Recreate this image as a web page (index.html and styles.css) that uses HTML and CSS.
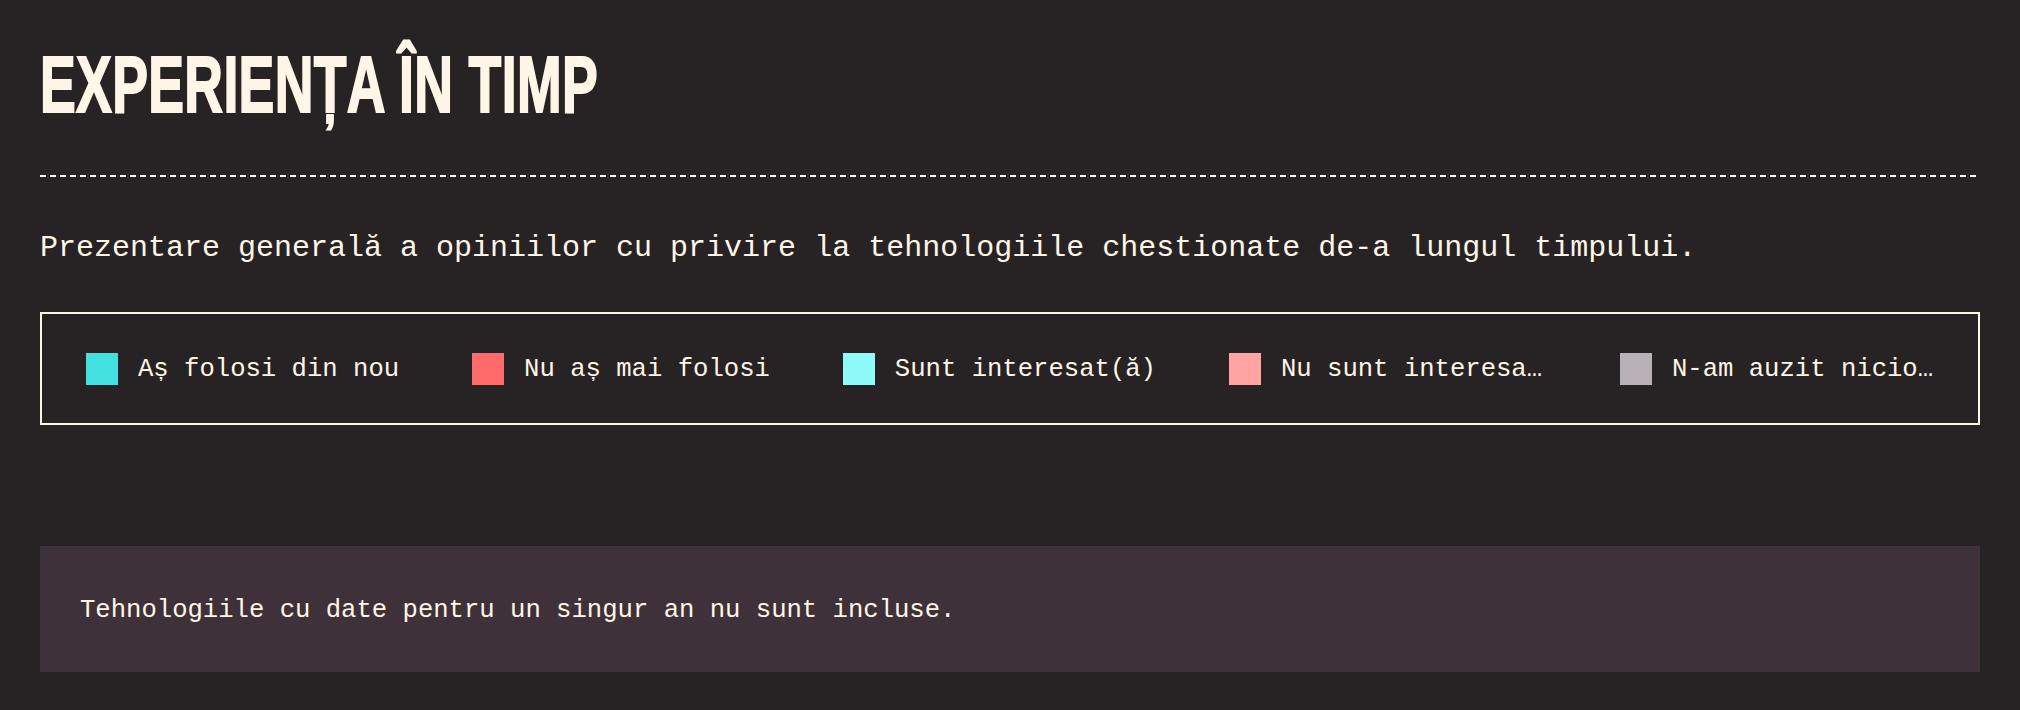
FILE: index.html
```html
<!DOCTYPE html>
<html lang="ro">
<head>
<meta charset="utf-8">
<title>Experiența în timp</title>
<link rel="stylesheet" href="styles.css">
</head>
<body>
<main class="page">
  <header class="block-header">
    <h1 class="block-title"><span class="block-title-text">EXPERIENȚA ÎN TIMP</span></h1>
  </header>
  <div class="rule"></div>
  <p class="block-description">Prezentare generală a opiniilor cu privire la tehnologiile chestionate de-a lungul timpului.</p>
  <div class="legend">
    <div class="legend-item"><span class="swatch swatch-would-use"></span><span class="legend-label">Aș folosi din nou</span></div>
    <div class="legend-item"><span class="swatch swatch-would-not-use"></span><span class="legend-label">Nu aș mai folosi</span></div>
    <div class="legend-item"><span class="swatch swatch-interested"></span><span class="legend-label">Sunt interesat(ă)</span></div>
    <div class="legend-item"><span class="swatch swatch-not-interested"></span><span class="legend-label">Nu sunt interesat(ă)</span></div>
    <div class="legend-item"><span class="swatch swatch-never-heard"></span><span class="legend-label">N-am auzit niciodată</span></div>
  </div>
  <div class="note">Tehnologiile cu date pentru un singur an nu sunt incluse.</div>
</main>
</body>
</html>
```
FILE: styles.css
```css
html, body {
  margin: 0;
  padding: 0;
  background: #272325;
}

body {
  color: #fff6e7;
  font-family: "Liberation Mono", "DejaVu Sans Mono", monospace;
}

.page {
  padding: 44px 40px 40px;
}

.block-header {
  height: 81px;
}

.block-title {
  margin: 0;
  font-family: "Liberation Sans", Arial, sans-serif;
  font-weight: 700;
  font-size: 80px;
  line-height: 81px;
  white-space: nowrap;
}

.block-title-text {
  display: inline-block;
  transform: scaleX(0.67);
  transform-origin: 0 50%;
  -webkit-text-stroke: 2px #fff6e7;
  letter-spacing: 0.5px;
}

.rule {
  margin-top: 50px;
  height: 2px;
  background: repeating-linear-gradient(to right, #fff6e7 0 6px, transparent 6px 10px);
}

.block-description {
  margin: 49px 0 0;
  font-size: 30px;
  line-height: 45px;
}

.legend {
  margin-top: 41px;
  border: 2px solid #fff6e7;
  padding: 37px 44px;
  display: flex;
  align-items: center;
  gap: 73px;
}

.legend-item {
  flex: none;
  display: flex;
  align-items: center;
  gap: 20px;
}

.swatch {
  flex: none;
  width: 32px;
  height: 32px;
}

.swatch-would-use { background: #43e0e0; }
.swatch-would-not-use { background: #ff6a6a; }
.swatch-interested { background: #8ffafa; }
.swatch-not-interested { background: #ffa3a3; }
.swatch-never-heard { background: #bab1b6; }

.legend-label {
  flex: none;
  display: block;
  font-size: 25.6px;
  line-height: 32px;
  padding-top: 3px;
  max-width: 266px;
  white-space: nowrap;
  overflow: hidden;
  text-overflow: ellipsis;
}

.note {
  margin-top: 121px;
  background: #3f3139;
  padding: 42px 40px 38px;
  font-size: 25.6px;
  line-height: 46px;
}
```
